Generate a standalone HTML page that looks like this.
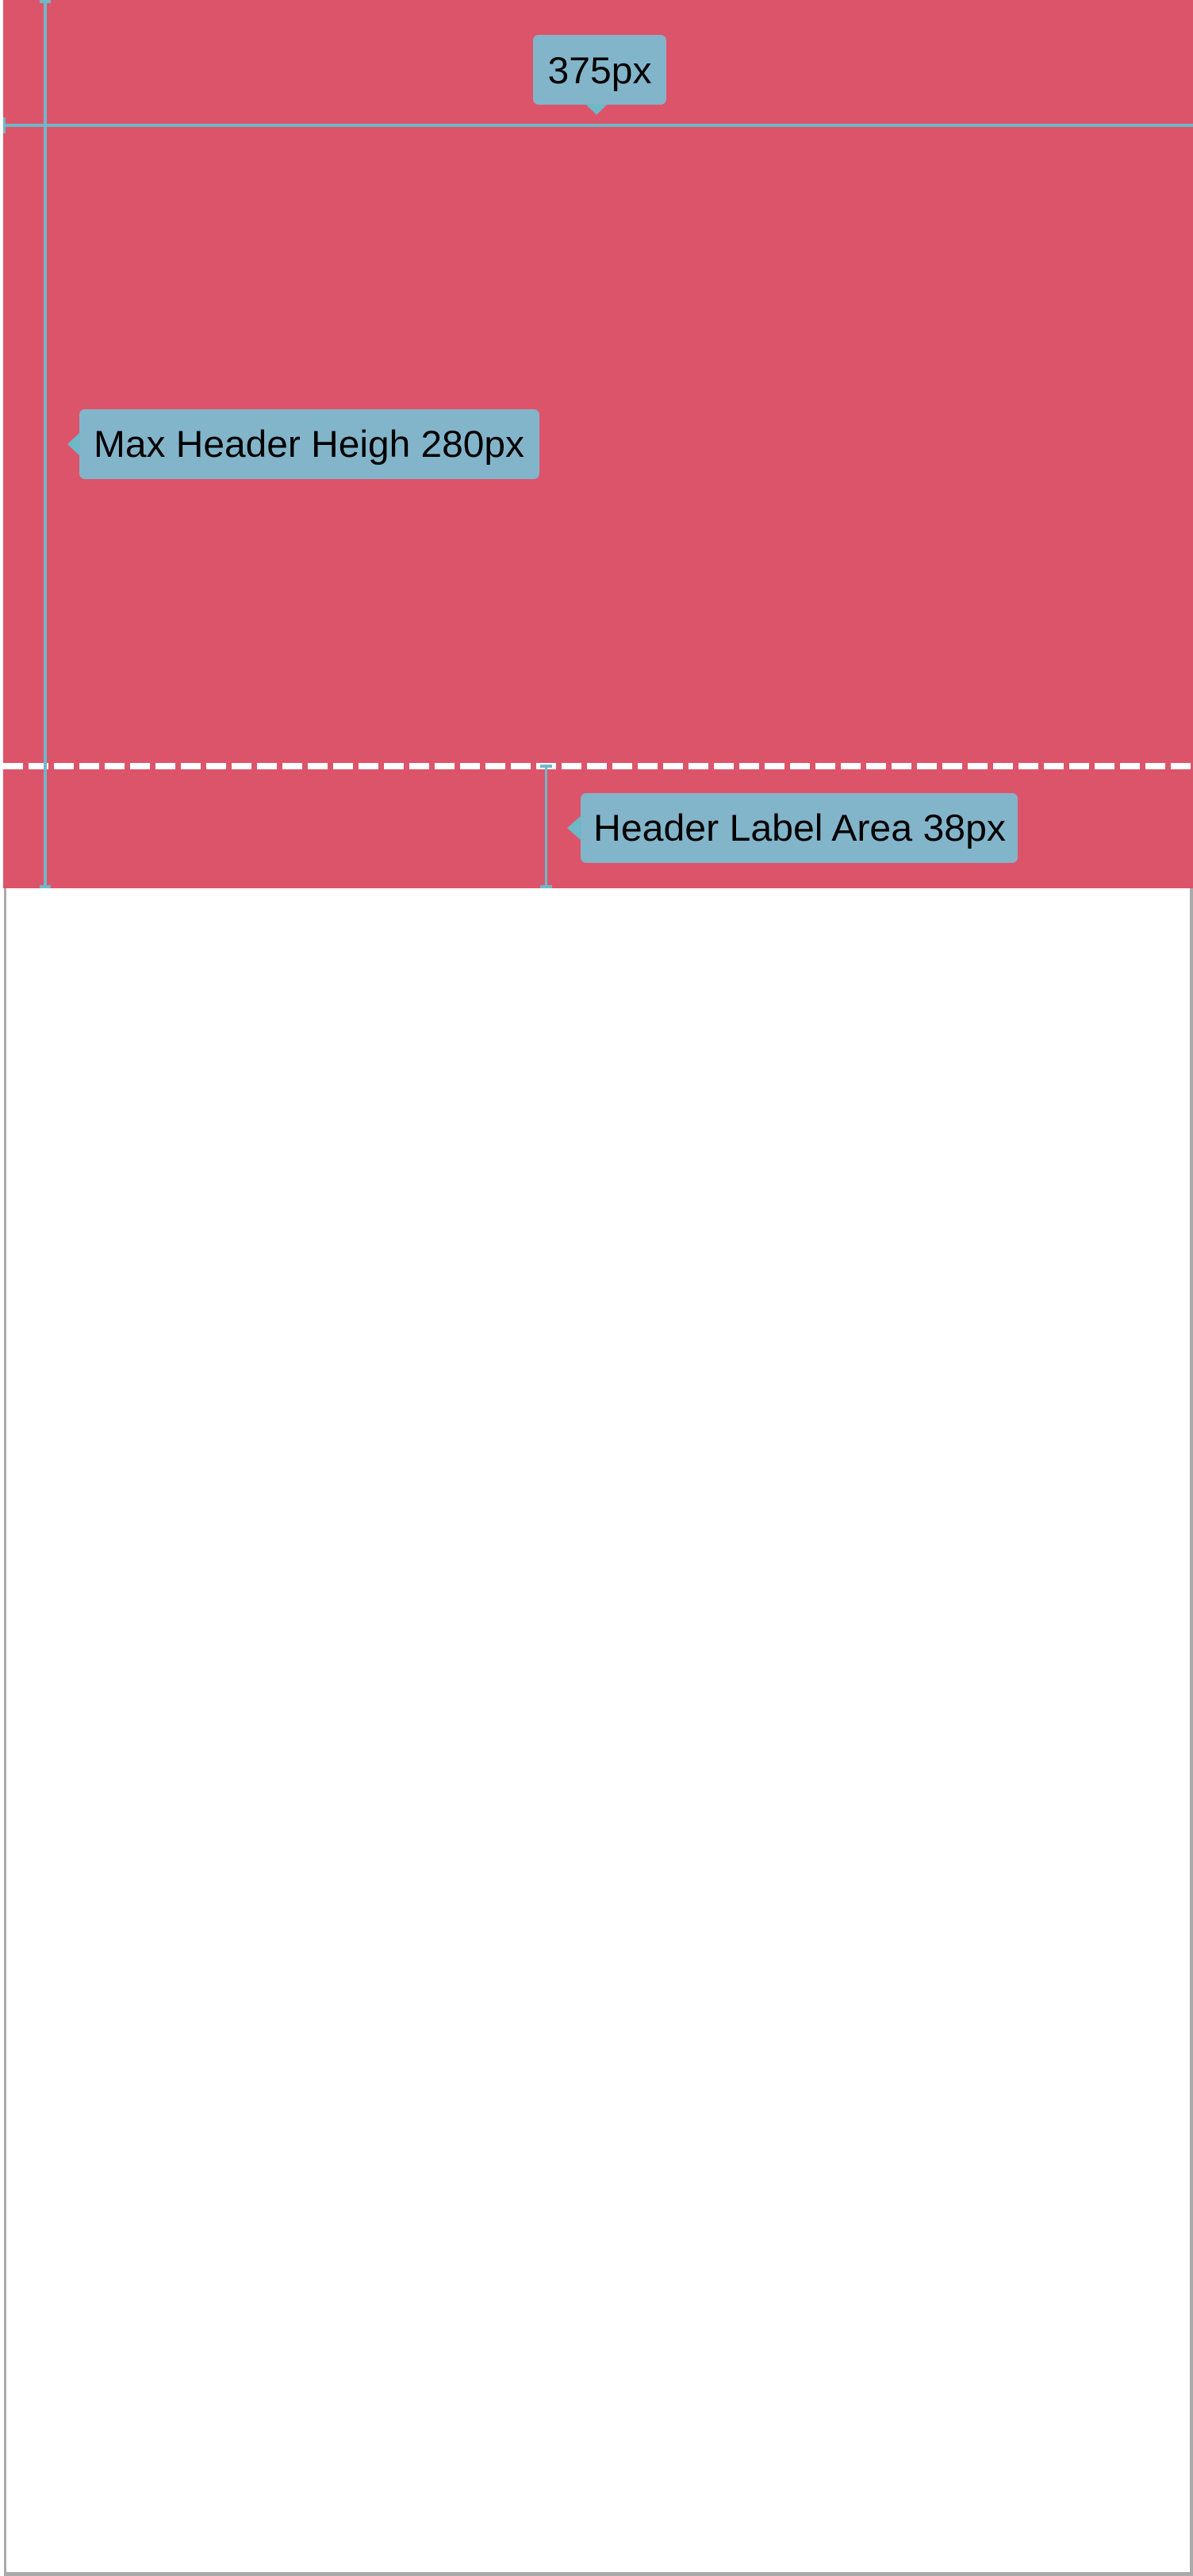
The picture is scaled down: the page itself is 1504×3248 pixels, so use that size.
<!DOCTYPE html>
<html><head><meta charset="utf-8"><style>
html,body{margin:0;padding:0;background:#fff;width:1504px;height:3248px;overflow:hidden}
</style></head><body>
<svg width="1504" height="3248" viewBox="0 0 1504 3248" xmlns="http://www.w3.org/2000/svg" style="display:block">
<rect x="0" y="0" width="1504" height="3248" fill="#fff"/>
<!-- frame border -->
<rect x="5" y="1120" width="3" height="2128" fill="#aaa"/>
<rect x="1500" y="1120" width="4" height="2128" fill="#aaa"/>
<rect x="5" y="3243" width="1499" height="5" fill="#aaa"/>
<!-- header -->
<rect x="4" y="0" width="1500" height="1120" fill="#dc546a"/>
<!-- dashed line -->
<line x1="4" y1="966" x2="1504" y2="966" stroke="#fff" stroke-width="8" stroke-dasharray="25 7"/>
<!-- vertical line left -->
<rect x="55" y="0" width="4" height="1120" fill="#6fb8c8"/>
<rect x="50" y="0" width="14" height="4" fill="#6fb8c8"/>
<rect x="50" y="1116" width="14" height="4" fill="#6fb8c8"/>
<!-- horizontal line -->
<rect x="4" y="156" width="1500" height="4" fill="#6fb8c8"/>
<rect x="4" y="148" width="3" height="20" fill="#6fb8c8"/>
<!-- second vertical -->
<rect x="687" y="966" width="3" height="154" fill="#6fb8c8"/>
<rect x="681" y="964" width="15" height="4" fill="#6fb8c8"/>
<rect x="681" y="1116" width="15" height="4" fill="#6fb8c8"/>
<!-- label 375px -->
<rect x="672" y="44" width="168" height="88" rx="7" fill="#83b5ca"/>
<polygon points="738,131 766,131 752,145" fill="#6fb8c8"/>
<text x="756" y="105" text-anchor="middle" font-family="Liberation Sans, sans-serif" font-size="47" fill="#000" textLength="131" lengthAdjust="spacingAndGlyphs">375px</text>
<!-- label max header -->
<rect x="100" y="516" width="580" height="88" rx="7" fill="#83b5ca"/>
<polygon points="101,545 101,575 85,560" fill="#6fb8c8"/>
<text x="118" y="576" font-family="Liberation Sans, sans-serif" font-size="47" fill="#000" textLength="543" lengthAdjust="spacingAndGlyphs">Max Header Heigh 280px</text>
<!-- label header label area -->
<rect x="732" y="1000" width="551" height="88" rx="7" fill="#83b5ca"/>
<polygon points="733,1028 733,1060 715,1044" fill="#6fb8c8"/>
<text x="748" y="1060" font-family="Liberation Sans, sans-serif" font-size="47" fill="#000" textLength="520" lengthAdjust="spacingAndGlyphs">Header Label Area 38px</text>
</svg>
</body></html>
